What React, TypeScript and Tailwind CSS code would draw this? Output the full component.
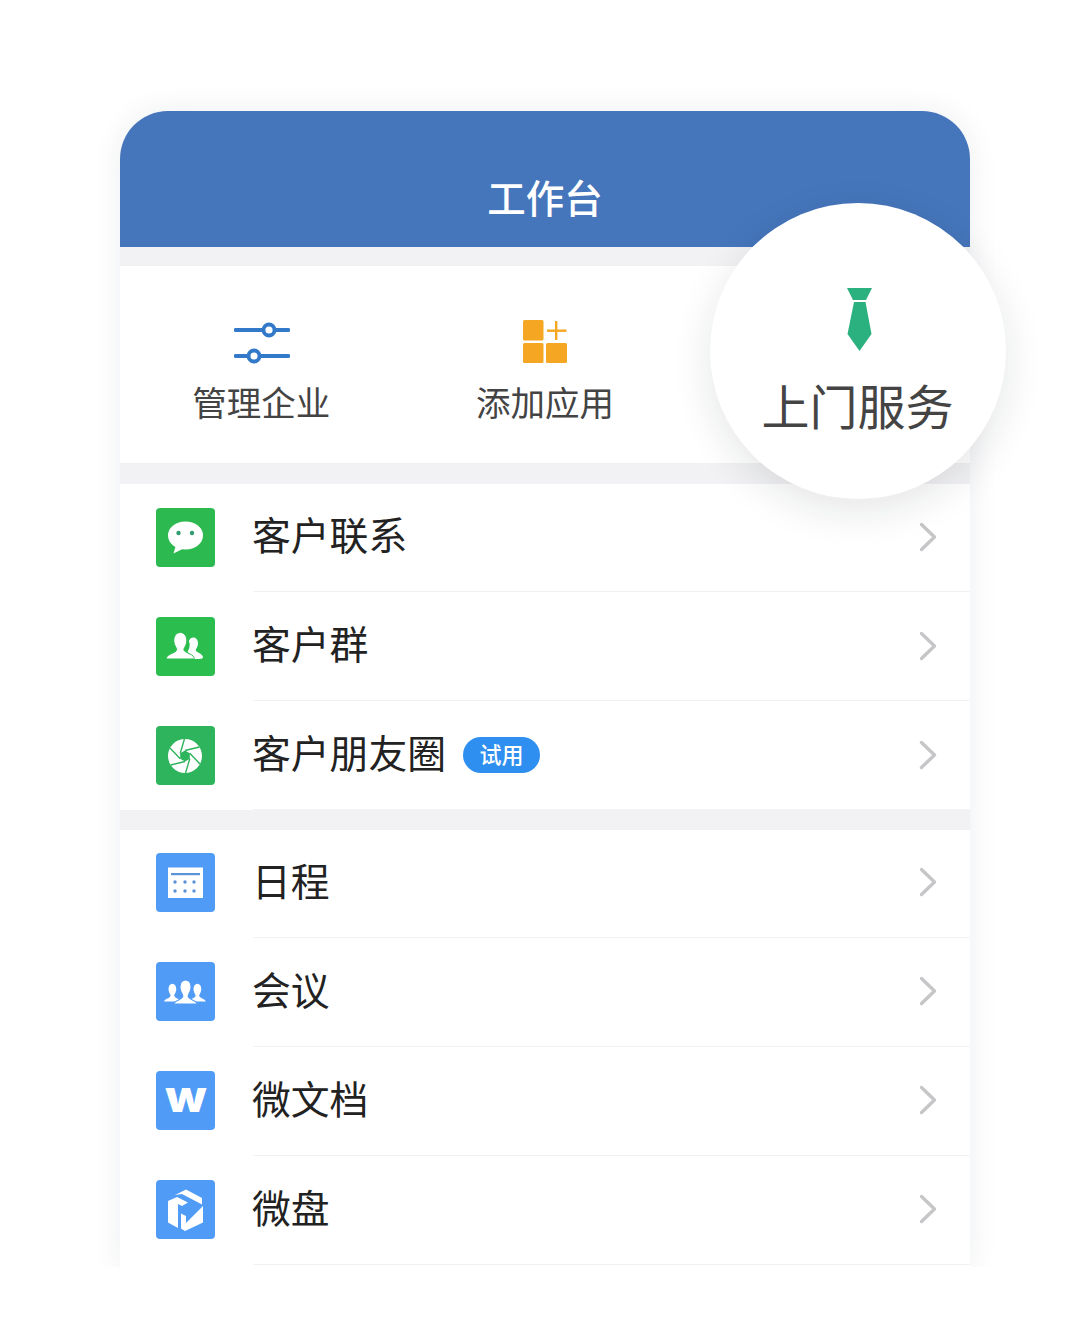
import { ReactNode } from 'react';

const cjk = 'font-["Noto_Sans_CJK_SC","Noto_Sans",sans-serif]';

function WeChatIcon() {
  return (
    <svg viewBox="0 0 59 59" className="h-full w-full">
      <ellipse cx="29.500" cy="27.500" rx="17.500" ry="14" fill="#fff" />
      <path d="M20 37l-2.500 8.500 9-4.500z" fill="#fff" />
      <circle cx="22.500" cy="25" r="2.200" fill="#2f9e6e" />
      <circle cx="36" cy="25" r="2.200" fill="#2f9e6e" />
    </svg>
  );
}

function GroupIcon() {
  return (
    <svg viewBox="0 0 59 59" fill="#fff" className="h-full w-full">
      <path d="M33 42H39.500c3 0 7.500 0 7.500-1.500 0-3-4-4.500-6.500-6-1-.7-.8-2 0-3.200 1-1.600 1.500-3.300 1.500-5.300 0-3-2-5.500-4.500-5.500s-4 1.700-4.600 3.500c1.400 3 1 7-1 10-.4.700-.2 1.200.5 1.700 2.500 1.500 3.500 3.500 2.600 6.300z" />
      <path d="M11 42c-.8 0-.8-1.500 0-2.500 2-2.500 7-3.500 9-5.500 1-1 .8-2.200 0-3.500-1.400-2-2.200-4.500-2.200-7.200 0-4.500 2.800-7.800 6.500-7.800s6.500 3.300 6.500 7.800c0 2.700-.8 5.200-2.200 7.200-.8 1.300-1 2.500 0 3.500 2 2 7 3 9 5.500.8 1 .8 2.500 0 2.500z" stroke="#2bbd4e" strokeWidth="1" />
    </svg>
  );
}

function ShutterIcon() {
  const angles = [0, 60, 120, 180, 240, 300];
  return (
    <svg viewBox="0 0 59 59" className="h-full w-full">
      <circle cx="29" cy="30" r="17" fill="#fff" />
      <g stroke="#2eb45c" strokeWidth="1.400" fill="none">
        {angles.map((a) => (
          <path key={a} d="M29 24.500L43.500 21" transform={`rotate(${a} 29 30)`} />
        ))}
      </g>
      <path d="M29 24.500l4.800 2.750v5.500L29 35.500l-4.800-2.750v-5.500z" fill="#2eb45c" />
    </svg>
  );
}

function CalendarIcon() {
  const dots = [19, 29, 38];
  return (
    <svg viewBox="0 0 59 59" className="h-full w-full">
      <rect x="12" y="14.500" width="35" height="30.500" fill="#fff" />
      <rect x="15" y="20" width="29" height="2.200" fill="#5b93d8" />
      {dots.map((x) => (
        <g key={x} fill="#5b93d8">
          <circle cx={x} cy="29" r="1.700" />
          <circle cx={x} cy="38" r="1.700" />
        </g>
      ))}
    </svg>
  );
}

function MeetingIcon() {
  const person = 'M0 14c.5-2 5-3 6-4.500.5-.8.2-1.500-.3-2.300C4.800 5.800 4.300 4.300 4.300 2.800 4.300 0 5.800-2 8-2s3.700 2 3.700 4.800c0 1.500-.5 3-1.400 4.400-.5.800-.8 1.500-.3 2.300 1 1.500 5.500 2.500 6 4.500z';
  return (
    <svg viewBox="0 0 59 59" fill="#fff" className="h-full w-full">
      <path d={person} transform="translate(8 24) scale(1.050 1.100)" />
      <path d={person} transform="translate(33 24) scale(1.050 1.100)" />
      <path d={person} transform="translate(17.500 21) scale(1.500)" stroke="#509bf6" strokeWidth=".7" />
    </svg>
  );
}

function DiskIcon() {
  return (
    <svg viewBox="0 0 59 59" fill="#fff" className="h-full w-full">
      <path d="M19 15L30 9.500l16 8.500v6.500L26 14z" />
      <path d="M12 21l9-4 11 5.500-6 3.500-4-2v24l-10-5.500z" />
      <path d="M47 26v16.500L29 51l-4-2.500v-15l5 2.500v7z" />
    </svg>
  );
}

function Chevron() {
  return (
    <svg viewBox="0 0 18 30" className="h-[30px] w-[18px]" fill="none" stroke="#c6c6c8" strokeWidth="3.400" strokeLinecap="round" strokeLinejoin="round">
      <path d="M2.500 2.500L15.500 15 2.500 27.500" />
    </svg>
  );
}

type Row = { label: string; icon: ReactNode; color: string; badge?: boolean };

const customerRows: Row[] = [
  { label: '客户联系', icon: <WeChatIcon />, color: 'bg-[#2cb94f]' },
  { label: '客户群', icon: <GroupIcon />, color: 'bg-[#2bbd4e]' },
  { label: '客户朋友圈', icon: <ShutterIcon />, color: 'bg-[#2eb45c]', badge: true },
];

const toolRows: Row[] = [
  { label: '日程', icon: <CalendarIcon />, color: 'bg-[#509bf6]' },
  { label: '会议', icon: <MeetingIcon />, color: 'bg-[#509bf6]' },
  {
    label: '微文档',
    icon: <span className="scale-x-[1.2] font-['Inter',sans-serif] text-[33px] leading-none font-black text-white">W</span>,
    color: 'bg-[#509bf6]',
  },
  { label: '微盘', icon: <DiskIcon />, color: 'bg-[#509bf6]' },
];

// nudge: rows that sit a pixel higher than the even 109px rhythm
function ListSection({ rows, nudgeAll }: { rows: Row[]; nudgeAll?: boolean }) {
  return (
    <div className="bg-white">
      {rows.map((r, i) => {
        const up = i === 0 || nudgeAll;
        const extraUp = nudgeAll && i === 0;
        return (
          <div key={r.label} className={`flex items-center pl-9 ${i === 0 ? 'h-[108px]' : 'h-[109px]'}`}>
            <div
              className={`flex h-[59px] w-[59px] shrink-0 items-center justify-center rounded-[4px] ${r.color} ${extraUp ? 'mb-[4px]' : up ? 'mb-[2px]' : ''}`}
            >
              {r.icon}
            </div>
            <div className="ml-[38px] flex h-full flex-1 items-center border-b border-[#f2f2f3] pr-[33px]">
              <span className="-ml-px mb-[8px] text-[38.8px] leading-none text-[#222]">{r.label}</span>
              {r.badge && (
                <span className="ml-[17px] flex h-[36px] w-[77px] items-center justify-center rounded-full bg-[#2e8ff0] text-white">
                  <span className="mb-[4px] text-[22px] leading-none font-medium">试用</span>
                </span>
              )}
              <span className={`ml-auto flex ${extraUp ? 'mb-[4px]' : up ? 'mb-[2px]' : ''}`}>
                <Chevron />
              </span>
            </div>
          </div>
        );
      })}
    </div>
  );
}

export default function App() {
  return (
    <div className={`min-h-[1325px] bg-white ${cjk}`}>
      <div className="h-[1267px] overflow-hidden pt-[111px] pr-[110px] pl-[120px]">
        <div className="relative rounded-t-[48px] bg-[#f2f2f4] shadow-[0_0_30px_rgba(30,40,70,0.08)]">
          {/* Header */}
          <div className="flex h-[136px] items-end justify-center rounded-t-[48px] bg-[#4575bb] pb-[23px]">
            <h1 className="text-[38.5px] leading-[56px] font-medium text-white">工作台</h1>
          </div>

          {/* Quick actions */}
          <div className="mt-[19px] grid h-[197px] grid-cols-3 bg-white">
            <div className="flex flex-col items-center pt-[54px]">
              <svg viewBox="0 0 56 44" className="h-[44px] w-[56px]" fill="none" stroke="#3279c9" strokeWidth="3.800" strokeLinecap="round">
                <path d="M1.500 10H29M41 10H54.500" />
                <circle cx="35" cy="10" r="5.500" />
                <path d="M1.500 36H14.500M26 36H54.500" />
                <circle cx="20" cy="36" r="5.500" />
              </svg>
              <span className="mt-[12px] -ml-px text-[34.5px] leading-[50px] text-[#444]">管理企业</span>
            </div>
            <div className="flex flex-col items-center pt-[54px]">
              <svg viewBox="0 0 44 43" className="h-[43px] w-[44px]">
                <g fill="#f5a623">
                  <rect x="0" y="0" width="20.500" height="20.500" rx="1.500" />
                  <rect x="0" y="23" width="20.500" height="20" rx="1.500" />
                  <rect x="23" y="23" width="21" height="20" rx="1.500" />
                  <rect x="32" y="1" width="2.400" height="19" />
                  <rect x="24" y="9.500" width="19.500" height="2.400" />
                </g>
              </svg>
              <span className="mt-[13px] text-[34.5px] leading-[50px] text-[#444]">添加应用</span>
            </div>
            <div />
          </div>

          <div className="h-[21px]" />
          <ListSection rows={customerRows} />
          <div className="h-[20px]" />
          <ListSection rows={toolRows} nudgeAll />
          <div className="h-[2px] bg-white" />

          {/* Highlighted service bubble */}
          <div className="absolute top-[92px] left-[590px] flex h-[296px] w-[296px] flex-col items-center rounded-full bg-white pt-[85px] shadow-[0_12px_40px_rgba(20,25,40,0.11)]">
            <svg viewBox="0 0 25 63" className="ml-[2px] h-[63px] w-[25px]">
              <path d="M0 0H25L19 12H6z" fill="#2bb07f" />
              <path d="M7 14H18.500L24.500 46 12.500 63 .5 46z" fill="#2bb07f" />
            </svg>
            <span className="mt-[18px] -ml-px text-[48px] leading-[70px] text-[#444]">上门服务</span>
          </div>
        </div>
      </div>
    </div>
  );
}
